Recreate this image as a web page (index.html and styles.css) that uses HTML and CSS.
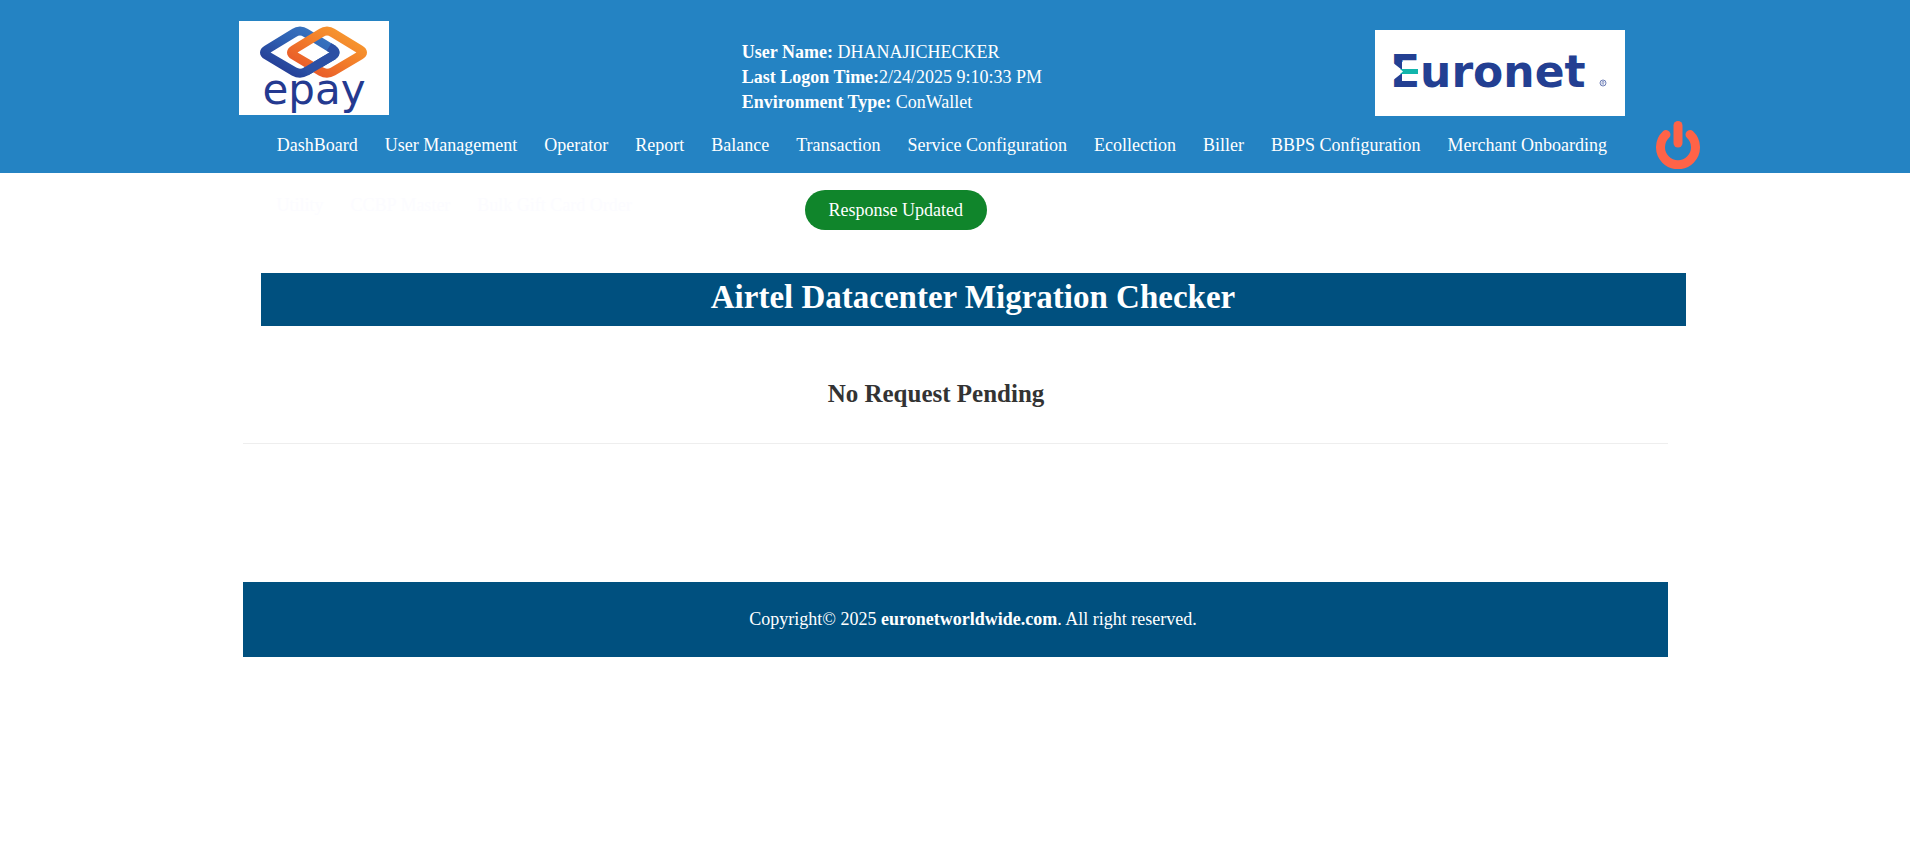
FILE: index.html
```html
<!DOCTYPE html>
<html lang="en">
<head>
<meta charset="utf-8">
<title>Airtel Datacenter Migration Checker</title>
<link rel="stylesheet" href="styles.css">
</head>
<body>
<header class="header">
  <div class="brand-row">
    <svg class="logo-epay" viewBox="0 0 150 94" role="img" aria-label="epay">
      <defs>
        <linearGradient id="blue" x1="0" y1="1" x2="1" y2="0">
          <stop offset="0" stop-color="#22338c"/><stop offset=".55" stop-color="#2f62b4"/><stop offset="1" stop-color="#3d7cc4"/>
        </linearGradient>
        <linearGradient id="orange" x1="0" y1="1" x2="1" y2="0">
          <stop offset="0" stop-color="#e5502a"/><stop offset=".5" stop-color="#f27b2a"/><stop offset="1" stop-color="#f8a030"/>
        </linearGradient>
      </defs>
      <rect width="150" height="94" fill="#fff"/>
      <path d="M55 12Q61 8 67 12L94 28.500Q98 31.500 94 34.500L67 50.500Q61 54 55 50.500L28 34.500Q23 31.500 28 28.500Z" fill="none" stroke="url(#blue)" stroke-width="9"/>
      <path d="M82 12Q88 8 94 12L121 28.500Q126 31.500 121 34.500L94 50.500Q88 54 82 50.500L55 34.500Q50 31.500 55 28.500Z" fill="none" stroke="url(#orange)" stroke-width="9"/>
      <path d="M90 26L94 28.500Q98 31.500 94 34.500L67 50.500" fill="none" stroke="#2c50a4" stroke-width="9"/>
      <text class="epay-word" x="75" y="83" text-anchor="middle">epay</text>
    </svg>
    <div class="session">
      <div><b>User Name:</b> DHANAJICHECKER</div>
      <div><b>Last Logon Time:</b>2/24/2025 9:10:33 PM</div>
      <div><b>Environment Type:</b> ConWallet</div>
    </div>
    <svg class="logo-euronet" viewBox="0 0 250 86" role="img" aria-label="Euronet">
      <rect width="250" height="86" fill="#fff"/>
      <text class="euronet-word" x="15" y="57">Euronet</text>
      <path d="M17 32L29 41.500L17 51ZM27 32H44V51H27Z" fill="#fff"/>
      <path d="M25 39H43V44H25L28 41.500Z" fill="#12b5ac"/>
      <circle cx="228" cy="53" r="3" fill="none" stroke="#6f80b8"/>
      <path d="M227 55V51.500H229V53H227M228 53L229 55" fill="none" stroke="#6f80b8" stroke-width=".6"/>
    </svg>
  </div>
  <div class="nav-row">
    <nav class="menu">
      <a href="#">DashBoard</a><a href="#">User Management</a><a href="#">Operator</a><a href="#">Report</a><a href="#">Balance</a><a href="#">Transaction</a><a href="#">Service Configuration</a><a href="#">Ecollection</a><a href="#">Biller</a><a href="#">BBPS Configuration</a><a href="#">Merchant Onboarding</a>
    </nav>
    <button class="power" type="button" aria-label="Log out">
      <svg viewBox="0 0 44 48" width="44" height="48" fill="none" stroke="#ff6347" stroke-linecap="round" stroke-width="9">
        <path d="M22 4.500V22"/><path d="M10 13.500A17.500 17.500 0 1 0 34 13.500"/>
      </svg>
    </button>
  </div>
</header>
<main class="page">
  <div class="status-row">
    <nav class="menu menu-faint"><a href="#">Utility</a><a href="#">CCBP Master</a><a href="#">Bulk Gift Card Order</a></nav>
    <button class="response" type="button">Response Updated</button>
  </div>
  <h1 class="title">Airtel Datacenter Migration Checker</h1>
  <h2 class="empty">No Request Pending</h2>
  <hr class="rule">
  <footer class="footer">Copyright© 2025&nbsp;<b>euronetworldwide.com</b>. All right reserved.</footer>
</main>
</body>
</html>
```
FILE: styles.css
```css
* { box-sizing: border-box; }
body {
  margin: 0;
  background: #fff;
  color: #333;
  font-family: "Liberation Serif", "Times New Roman", serif;
  font-size: 18px;
  line-height: 25px;
}
a { color: inherit; text-decoration: none; }
button { font: inherit; border: 0; cursor: pointer; }
.header {
  padding: 21px 11% 4px 12.5%;
  background: #2483c3;
  color: #fff;
}
.brand-row { display: flex; align-items: flex-start; height: 100px; }
.logo-epay { width: 150px; height: 94px; }
.session { margin: 19px auto 0 353px; white-space: nowrap; }
.logo-euronet { width: 250px; height: 86px; margin: 9px 75px 0 0; }
.epay-word { font: 42px "DejaVu Sans", sans-serif; fill: #243a90; }
.euronet-word { font: bold 44px "DejaVu Sans", sans-serif; fill: #233f92; }
.nav-row { display: flex; justify-content: space-between; align-items: center; padding-left: 38px; }
.menu { display: flex; gap: 27px; white-space: nowrap; }
.power { display: flex; padding: 0; background: none; }
.page { width: 75%; max-width: 1425px; margin: 0 auto; }
.status-row { display: grid; grid-template-columns: 562px auto; justify-content: start; padding-top: 17px; }
.menu-faint { padding: 3px 0 0 34px; color: #fcfcff; }
.response {
  height: 40px;
  padding: 0 24px;
  border-radius: 20px;
  background: #10852b;
  color: #fff;
}
.title {
  margin: 43px -18px 0 18px;
  padding: 6px 0 11px;
  background: #00507f;
  color: #fff;
  font-size: 33px;
  line-height: 36px;
  text-align: center;
}
.empty {
  margin: 54px 0 0;
  padding-right: 38px;
  font-size: 25px;
  line-height: 28px;
  text-align: center;
}
.rule { margin: 35px 0 138px; border: 0; border-top: 1px solid #eee; }
.footer {
  padding: 25px 0 25px 36px;
  background: #00507f;
  color: #fff;
  text-align: center;
}
```
